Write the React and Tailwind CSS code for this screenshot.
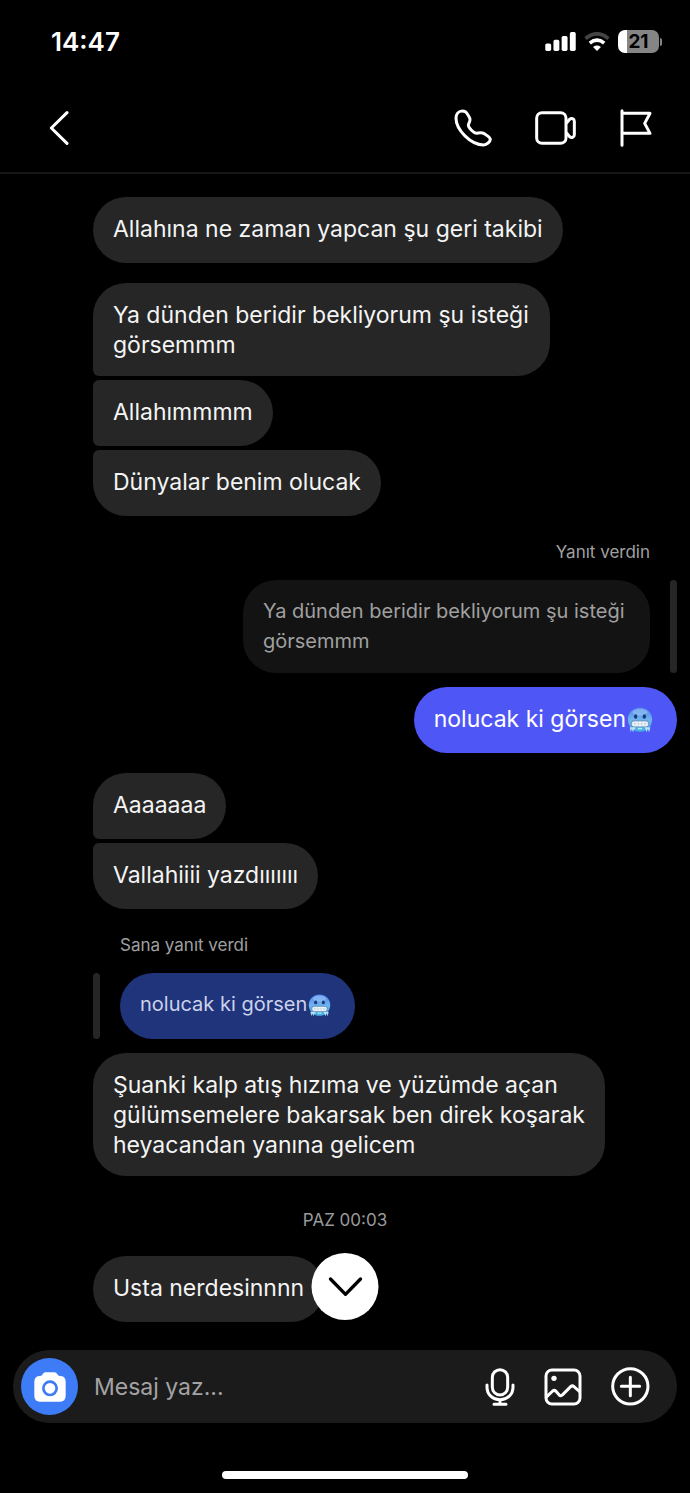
import React, { useState } from 'react';

const ColdFace = ({ className, id }) => (
  <svg viewBox="0 0 60 60" className={className} role="img" aria-label="🥶">
    <defs>
      <linearGradient id={id} x1="0" y1="0" x2="0" y2="1">
        <stop offset="0" stopColor="#4f86ea" />
        <stop offset="0.5" stopColor="#6fb2ef" />
        <stop offset="1" stopColor="#3fb0e4" />
      </linearGradient>
    </defs>
    <circle cx="30" cy="29" r="28" fill={`url(#${id})`} />
    <ellipse cx="30" cy="12" rx="17" ry="8" fill="#a9cffa" opacity="0.5" />
    <ellipse cx="20" cy="22" rx="4" ry="5" fill="#1b3a78" />
    <ellipse cx="40" cy="22" rx="4" ry="5" fill="#1b3a78" />
    <rect x="10" y="32" width="40" height="14" rx="6" fill="#f4f8fb" stroke="#4a80b4" strokeWidth="2" />
    <path d="M11 39h38M18 33v12M26 33v12M34 33v12M42 33v12" stroke="#9db9d2" />
    <path d="M6 47h14l-2 6-2-3-2 9-3-8-2 7zM24 48h12l-3 5-3-3-3 3zM40 47h14l-3 11-3-7-3 8-2-8z" fill="#c9f1fb" opacity="0.85" />
  </svg>
);

const messages = [
  { text: 'Allahına ne zaman yapcan şu geri takibi', box: 'rounded-[33px]' },
  { text: 'Ya dünden beridir bekliyorum şu isteği görsemmm', box: 'mt-5 max-w-[457px] rounded-[33px] rounded-bl-md' },
  { text: 'Allahımmmm', box: 'mt-1 rounded-r-[33px] rounded-l-md' },
  { text: 'Dünyalar benim olucak', box: 'mt-1 rounded-[33px] rounded-tl-md' },
  { label: 'Yanıt verdin', mine: true },
  { text: 'Ya dünden beridir bekliyorum şu isteği görsemmm', quote: true, mine: true, box: 'max-w-[407px] bg-[#131313] text-[#a0a0a0]' },
  { text: 'nolucak ki görsen', cold: true, mine: true, box: 'mt-[14px] rounded-[33px]' },
  { text: 'Aaaaaaa', box: 'mt-5 rounded-[33px] rounded-bl-md' },
  { text: 'Vallahiiii yazdııııııı', box: 'mt-1 rounded-[33px] rounded-tl-md' },
  { label: 'Sana yanıt verdi' },
  { text: 'nolucak ki görsen', cold: true, quote: true, box: 'bg-[#20347c] text-[#ccd2ea]' },
  { text: 'Şuanki kalp atış hızıma ve yüzümde açan gülümsemelere bakarsak ben direk koşarak heyacandan yanına gelicem', box: 'mt-[14px] max-w-[512px] rounded-[33px]' },
  { date: 'PAZ 00:03' },
  { text: 'Usta nerdesinnnn', box: 'mt-6 rounded-[33px]' },
];

const Message = ({ item, index }) => {
  if (item.date) {
    return <p className="mt-8 self-center text-[17px] leading-6 text-[#9a9a9a]">{item.date}</p>;
  }
  if (item.label) {
    return (
      <p className={`mt-6 text-[17px] leading-6 text-[#a0a0a0] ${item.mine ? 'mr-[40px] self-end' : 'ml-[120px] self-start'}`}>
        {item.label}
      </p>
    );
  }
  if (item.quote) {
    return (
      <div className={`mt-4 flex gap-5 ${item.mine ? 'mr-[13px] flex-row-reverse self-end' : 'ml-[93px] self-start'}`}>
        <span className="w-[7px] shrink-0 rounded-full bg-[#262626]" />
        <p className={`min-h-[66px] rounded-[33px] px-5 pt-4 pb-[17px] text-xl leading-[30px] ${item.box}`}>
          {item.text}
          {item.cold && <ColdFace id={`cold${index}`} className="mr-1 ml-px inline size-[23px] align-[-6px]" />}
        </p>
      </div>
    );
  }
  return (
    <p
      className={`min-h-[66px] px-5 pt-[17px] pb-4 text-[23px] leading-[30px] ${item.box} ${
        item.mine ? 'mr-[13px] self-end bg-[#4f56f6] text-white' : 'ml-[93px] self-start bg-[#262626] text-[#f4f4f4]'
      }`}
    >
      {item.text}
      {item.cold && <ColdFace id={`cold${index}`} className="mr-1 ml-px inline size-[26px] align-[-6px]" />}
    </p>
  );
};

const StatusBar = () => (
  <div className="flex h-[83px] items-center justify-between pr-[28px] pl-[51px]">
    <span className="text-[26px] font-semibold">14:47</span>
    <div className="flex items-center gap-2">
      <svg viewBox="0 0 93 58" className="h-[19px] w-[31px]" fill="#fff">
        <rect x="0" y="35" width="18" height="23" rx="5" />
        <rect x="25" y="24" width="18" height="34" rx="5" />
        <rect x="50" y="12" width="18" height="46" rx="5" />
        <rect x="75" y="0" width="18" height="58" rx="5" />
      </svg>
      <svg viewBox="0 0 78 58" className="h-[19px] w-[26px]" fill="none" strokeWidth="11">
        <path d="M4 20Q39-9 74 20" stroke="#444" />
        <path d="M17 34Q39 16 61 34" stroke="#fff" />
        <path d="M39 58L27 46Q39 37 51 46Z" fill="#fff" />
      </svg>
      <div className="flex items-center gap-[1px]">
        <span className="flex h-[23px] w-[41px] items-center justify-center rounded-[7px] bg-linear-to-r from-white from-22% to-[#858585] to-22% text-[19px] leading-none font-bold text-black">
          21
        </span>
        <span className="h-2 w-[2px] rounded-r-full bg-[#858585]" />
      </div>
    </div>
  </div>
);

const Header = () => (
  <header className="flex h-[91px] items-center justify-between border-b-2 border-[#161616] pr-[37px] pl-[49px]">
    <button type="button" aria-label="Geri">
      <svg viewBox="0 0 60 102" className="h-[34px] w-5" fill="none" stroke="#fff" strokeWidth="9" strokeLinecap="round" strokeLinejoin="round">
        <path d="M54 5L7 51l47 46" />
      </svg>
    </button>
    <div className="flex items-center gap-[43px]">
      <button type="button" aria-label="Sesli arama">
        <svg viewBox="0 0 114 114" className="size-[38px]" fill="none" stroke="#fff" strokeWidth="9" strokeLinejoin="round">
          <path d="M25 6C14 6 6 15 6 28C6 62 50 108 89 108C99 108 109 97 109 91C109 86 99 79 91 74C82 69 75 72 68 73C60 73 43 56 43 49C43 43 49 38 48 30C47 25 39 12 34 8C31 6 28 6 25 6Z" />
        </svg>
      </button>
      <button type="button" aria-label="Görüntülü arama">
        <svg viewBox="0 0 123 102" className="h-[34px] w-[41px]" fill="none" stroke="#fff" strokeWidth="9" strokeLinejoin="round">
          <rect x="5" y="5" width="88" height="92" rx="16" />
          <path d="M94 37L104 25Q108 21 113 23Q118 25 118 31V71Q118 77 113 79Q108 81 104 77L94 65" />
        </svg>
      </button>
      <button type="button" aria-label="Bildir">
        <svg viewBox="0 0 102 114" className="h-[38px] w-[34px]" fill="none" stroke="#fff" strokeWidth="9" strokeLinecap="round" strokeLinejoin="round">
          <path d="M9 5V109M9 13H93L77 43L93 73H9" />
        </svg>
      </button>
    </div>
  </header>
);

export default function App() {
  const [text, setText] = useState('');

  return (
    <div className="flex min-h-screen flex-col bg-black font-['Inter',sans-serif] text-white">
      <StatusBar />
      <Header />

      <main className="flex flex-1 flex-col pt-[23px] pb-7">
        {messages.map((item, index) => (
          <Message key={index} item={item} index={index} />
        ))}
      </main>

      <footer className="relative px-[13px] pb-[14px]">
        <button
          type="button"
          aria-label="En alta in"
          className="absolute -top-[97px] left-1/2 grid size-[67px] -translate-x-1/2 place-items-center rounded-full bg-white"
        >
          <svg viewBox="0 0 102 60" className="h-5 w-[34px]" fill="none" stroke="#000" strokeWidth="10" strokeLinecap="round" strokeLinejoin="round">
            <path d="M6 6L51 52L96 6" />
          </svg>
        </button>

        <form onSubmit={(e) => e.preventDefault()} className="flex h-[73px] items-center rounded-full bg-[#1b1b1b] pr-[27px] pl-2">
          <button type="button" aria-label="Kamera" className="grid size-[57px] shrink-0 place-items-center rounded-full bg-[#3e7bf6]">
            <svg viewBox="0 0 96 90" className="h-[30px] w-8">
              <path d="M34 1H62Q67 1 70 7Q72 12 78 12Q95 12 95 29V72Q95 89 78 89H18Q1 89 1 72V29Q1 12 18 12Q24 12 26 7Q29 1 34 1Z" fill="#fff" />
              <circle cx="48" cy="49" r="20" fill="none" stroke="#3e7bf6" strokeWidth="8" />
            </svg>
          </button>
          <input
            type="text"
            aria-label="Mesaj yaz"
            value={text}
            onChange={(e) => setText(e.target.value)}
            placeholder="Mesaj yaz..."
            className="min-w-0 flex-1 bg-transparent pl-4 text-[23px] leading-[30px] outline-none placeholder:text-[#a3a3a3]"
          />
          <div className="flex items-center gap-[29px]">
            <button type="button" aria-label="Ses kaydı">
              <svg viewBox="0 0 90 114" className="h-[38px] w-[30px]" fill="none" stroke="#fff" strokeWidth="9" strokeLinecap="round">
                <rect x="22" y="5" width="46" height="76" rx="23" />
                <path d="M6 51V57C6 80 23 95 45 95S84 80 84 57V51M45 96V108M27 109H63" />
              </svg>
            </button>
            <button type="button" aria-label="Galeri">
              <svg viewBox="0 0 114 114" className="size-[38px]" fill="none" stroke="#fff" strokeWidth="9" strokeLinejoin="round">
                <rect x="6" y="6" width="102" height="102" rx="18" />
                <path d="M6 88L26 69Q31 65 36 70L45 80Q50 86 56 80L80 56Q85 51 90 56L108 72" />
                <circle cx="30" cy="31" r="8" fill="#fff" stroke="none" />
              </svg>
            </button>
            <button type="button" aria-label="Ekle">
              <svg viewBox="0 0 117 117" className="size-[39px]" fill="none" stroke="#fff" strokeWidth="9" strokeLinecap="round">
                <circle cx="58" cy="58" r="53" />
                <path d="M58 31V86M31 58H86" />
              </svg>
            </button>
          </div>
        </form>

        <div className="mx-auto mt-12 h-2 w-[246px] rounded-full bg-white" />
      </footer>
    </div>
  );
}
